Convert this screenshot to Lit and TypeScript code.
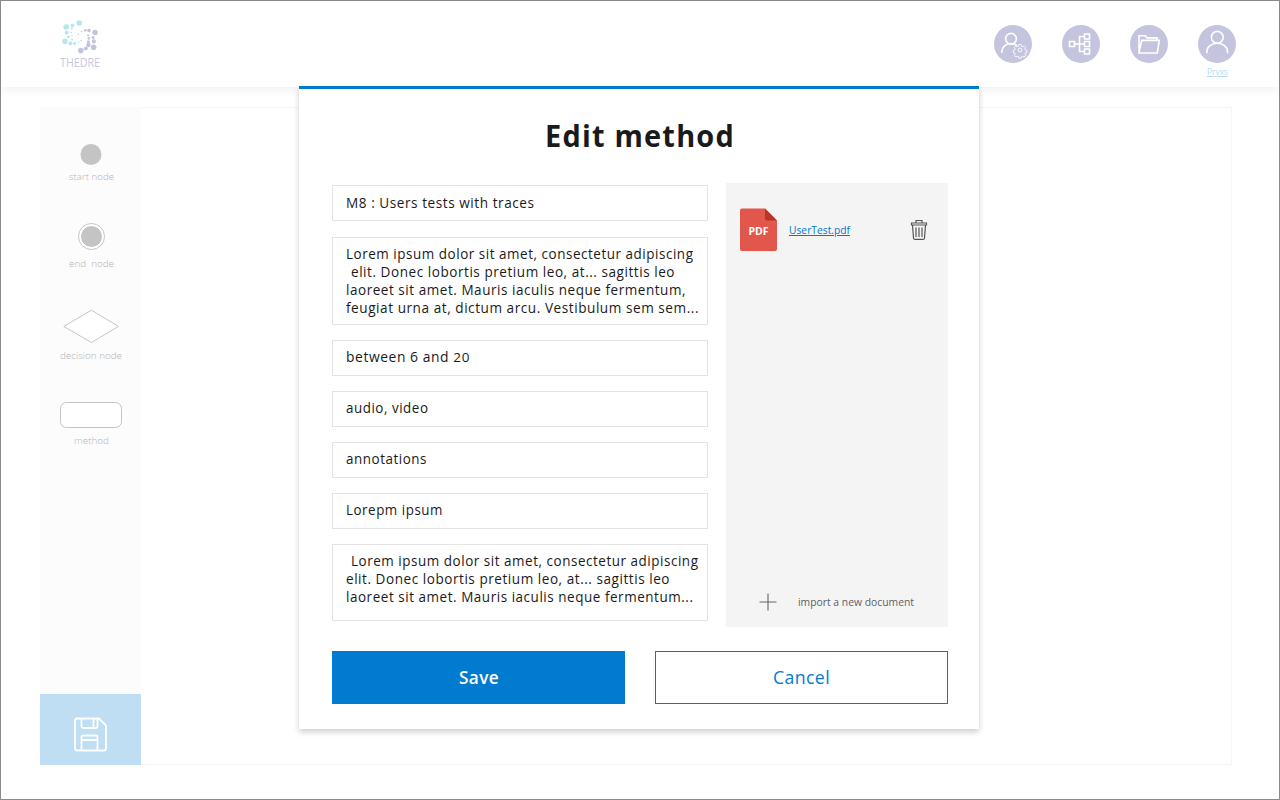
import { LitElement, html, css, svg } from "lit";
import { customElement, property } from "lit/decorators.js";

/** One line of text drawn exactly `span` pixels wide; `tail` is set in low figures. */
@customElement("fit-text")
export class FitText extends LitElement {
  @property({ type: Number }) span = 0;
  @property() text = "";
  @property() tail = "";
  @property({ type: Boolean, reflect: true }) underlined = false;

  static styles = css`
    :host {
      display: inline-block;
      white-space: pre;
      text-align: left;
    }
    .line {
      display: inline-block;
      transform-origin: 0 50%;
    }
    :host([underlined]) .line { text-decoration: underline; }
    .low {
      display: inline-block;
      font-size: 0.78em;
      line-height: 1;
      transform: scaleX(1.25);
      transform-origin: 0 50%;
      margin-right: 0.3em;
    }
  `;

  firstUpdated() {
    const line = this.renderRoot.querySelector(".line") as HTMLElement;
    const natural = line.getBoundingClientRect().width;
    if (this.span && natural) {
      this.style.width = `${this.span}px`;
      line.style.transform = `scaleX(${this.span / natural})`;
    }
  }

  render() {
    return html`<span class="line">${this.text}${this.tail ? html`<span class="low">${this.tail}</span>` : ""}</span>`;
  }
}

type Line = { text: string; w: number; indent?: boolean; tail?: string };
type Field = { size: string; lines: Line[] };

const FIELDS: Field[] = [
  { size: "first", lines: [{ text: "M8 : Users tests with traces", w: 188.5 }] },
  {
    size: "tall",
    lines: [
      { text: "Lorem ipsum dolor sit amet, consectetur adipiscing", w: 347.5 },
      { text: "elit. Donec lobortis pretium leo, at... sagittis leo", w: 324, indent: true },
      { text: "laoreet sit amet. Mauris iaculis neque fermentum,", w: 340 },
      { text: "feugiat urna at, dictum arcu. Vestibulum sem sem...", w: 353 },
    ],
  },
  { size: "", lines: [{ text: "between 6 and ", tail: "20", w: 124 }] },
  { size: "", lines: [{ text: "audio, video", w: 82.5 }] },
  { size: "", lines: [{ text: "annotations", w: 81 }] },
  { size: "", lines: [{ text: "Lorepm ipsum", w: 97 }] },
  {
    size: "medium",
    lines: [
      { text: "Lorem ipsum dolor sit amet, consectetur adipiscing", w: 347.5, indent: true },
      { text: "elit. Donec lobortis pretium leo, at... sagittis leo", w: 324 },
      { text: "laoreet sit amet. Mauris iaculis neque fermentum...", w: 347.5 },
    ],
  },
];

const LOGO_CYAN: [number, number, number][] = [
  [19.2, 3, 2.8], [12.4, 5.3, 1.9], [6.2, 7, 2.8], [6.7, 12.5, 2], [11.8, 8.4, 1.1],
  [11.2, 12.6, 0.8], [8.3, 17, 1.4], [5, 21.3, 2.8], [12, 19.4, 1], [10.4, 23.3, 2],
  [14.6, 23.4, 1.5], [18.4, 22.3, 0.8], [12, 16, 0.8],
];
const LOGO_VIOLET: [number, number, number][] = [
  [21.5, 11.6, 0.8], [25.3, 10.3, 1.4], [29, 10.6, 1.8], [35, 12.4, 2.7], [18.4, 14.2, 0.7],
  [28.2, 15.3, 1], [28.8, 18.4, 1.3], [33.2, 17.6, 1.5], [33.8, 21.4, 2.1], [28.4, 21.8, 1.6],
  [28.4, 25, 2.2], [33.6, 27.2, 2.8], [25.8, 28.6, 2], [20.8, 30.6, 2.8], [21.3, 20.4, 0.7],
];

const dots = (list: [number, number, number][], cls: string) =>
  list.map(([x, y, r]) => svg`<circle class=${cls} cx=${x} cy=${y} r=${r}></circle>`);

const ICONS = [
  svg`<circle cx="17" cy="13.8" r="5.4"/><path d="M7.800 28v-1c0-5 4.200-8.500 9-8.500 2.400 0 4.600.8 6.200 2.200"/>
    <g class="thin"><circle cx="26" cy="25" r="1.9"/><path d="M24.900 19.600h2.200l.4 1.600 1.300.5 1.400-.8 1.500 1.500-.8 1.400.5 1.200 1.500.4v2.100l-1.500.4-.5 1.200.8 1.400-1.500 1.500-1.400-.8-1.300.5-.4 1.500h-2.200l-.4-1.500-1.300-.5-1.400.8-1.400-1.500.8-1.400-.5-1.200-1.500-.4v-2.100l1.500-.4.5-1.200-.8-1.400 1.400-1.500 1.400.8 1.300-.5z"/></g>`,
  svg`<path d="M7.500 16.500h5v5h-5zM22.500 9h5v5h-5zM22.500 16.500h5v5h-5zM22.500 24h5v5h-5zM12.500 19h10M22.500 11.500h-5v15h5"/>`,
  svg`<path d="M9 28V10.800h6.300l1.700 2.100h10v2.500M9 28h18.300l2-12.600h-17.600z"/>`,
  svg`<circle cx="19.3" cy="12.3" r="5.9"/><path d="M8.900 28.300v-1.500c0-5 4.600-8.600 10.300-8.600s10.300 3.600 10.300 8.600v1.500"/>`,
];

@customElement("app-root")
export class AppRoot extends LitElement {
  static styles = css`
    * { box-sizing: border-box; }
    :host {
      display: block;
      width: 1280px;
      height: 800px;
      overflow: hidden;
      font-family: "Open Sans", "Noto Sans", sans-serif;
      color: #1a1a1a;
    }
    .page {
      position: relative;
      display: flex;
      flex-direction: column;
      height: 800px;
      border: 1px solid #8c8c8c;
      background: #fff;
    }
    svg { display: block; fill: none; }
    .header {
      display: flex;
      justify-content: space-between;
      height: 86px;
      flex: none;
      padding: 19px 43px 0 59px;
      box-shadow: 0 3px 10px rgba(0, 0, 0, 0.06);
    }
    .logo { width: 42px; }
    .cyan { fill: #b9e6ee; }
    .violet { fill: #c3c4db; }
    .brand {
      font: 400 12px/14px "Open Sans", sans-serif;
      color: #c6c8e0;
      height: 14px;
    }
    .nav { display: flex; gap: 30px; padding-top: 5px; }
    .navitem { width: 38px; text-align: center; }
    .disc { width: 38px; height: 38px; border-radius: 50%; background: #c4c4de; }
    .disc svg { stroke: #fff; stroke-width: 1.6; }
    .disc .thin { stroke-width: 0.9; }
    .user {
      color: #b5daf2;
      font-size: 9.5px;
      line-height: 12px;
      margin-top: 3px;
    }
    .board {
      display: flex;
      width: 1192px;
      height: 658px;
      margin: 20px 0 0 39px;
      border: 1px solid #f6f6f6;
      border-left: 0;
    }
    .palette {
      display: flex;
      flex-direction: column;
      align-items: center;
      width: 101px;
      margin: -1px 0;
      padding: 36px 0 0 1px;
      background: #fcfcfc;
      font-size: 9.5px;
      line-height: 12px;
      font-weight: 300;
      color: #b4b4b4;
    }
    .palette svg { stroke: #c4c4c4; flex: none; }
    .solid { fill: #c4c4c4; stroke: none; }
    .white { fill: #fff; }
    .l1 { margin: 5px 0 39px; }
    .l2 { margin: 8px 0 39px; }
    .l3 { margin: 7px 0 40px; }
    .l4 { margin: 7px 0 0; }
    .savebox {
      display: flex;
      align-items: flex-end;
      justify-content: center;
      width: 101px;
      height: 71px;
      margin: auto 0 0 -1px;
      padding-bottom: 13px;
      background: #bfddf3;
    }
    .palette .savebox svg { stroke: #fff; stroke-width: 1.8; }
    .modal {
      position: absolute;
      left: 298px;
      top: 85px;
      width: 680px;
      height: 643px;
      padding: 0 31px 25px 33px;
      display: flex;
      flex-direction: column;
      border-top: 3px solid #007bd0;
      background: #fff;
      box-shadow: 0 3px 6px rgba(0, 0, 0, 0.2);
    }
    .title {
      margin: 0 0 25px;
      height: 69px;
      padding: 25px 1px 0 0;
      text-align: center;
      font-size: 31px;
      line-height: 42px;
      font-weight: 700;
      letter-spacing: 1.3px;
    }
    .body { display: flex; justify-content: space-between; height: 444px; }
    .fields { display: flex; flex-direction: column; width: 376px; gap: 15px; padding-top: 2px; }
    .field {
      height: 36px;
      border: 1px solid #e3e3e3;
      padding: 6px 0 0 13px;
      font-size: 15px;
      line-height: 18px;
      letter-spacing: 0.6px;
    }
    .field.first { padding-top: 7px; margin-bottom: 1px; }
    .tall { height: 88px; }
    .medium { height: 77px; }
    .row { height: 18px; }
    .indent { padding-left: 4.5px; }
    .docs {
      display: flex;
      flex-direction: column;
      justify-content: space-between;
      width: 222px;
      padding: 25px 20px 14px 14px;
      background: #f4f4f4;
    }
    .doc { display: flex; align-items: center; height: 44px; }
    .link { flex: 1; margin: -1px 0 0 12px; font-size: 11.5px; color: #007bd0; }
    .trash { stroke: #555; stroke-width: 1.2; margin-top: -1px; }
    .pdf { font: 700 10.5px "Open Sans", sans-serif; fill: #fff; }
    .import { display: flex; align-items: center; gap: 21px; height: 22px; padding-left: 19px; font-size: 11px; color: #606060; }
    .caption { margin-top: -2px; }
    .plus { stroke: #666; stroke-width: 1.1; }
    .actions { display: flex; justify-content: space-between; margin-top: 24px; }
    .btn {
      width: 293px;
      height: 53px;
      padding: 0 0 2px;
      border: 1px solid #007bd0;
      background: #fff;
      color: #007bd0;
      font: 400 18.5px/49px "Open Sans", sans-serif;
      letter-spacing: 0.4px;
      text-align: center;
    }
    .primary { background: #007bd0; color: #fff; font-weight: 600; }
  `;

  render() {
    return html`
      <div class="page">
        <header class="header">
          <div class="logo">
            <svg width="42" height="36" viewBox="0 0 42 36">
              ${dots(LOGO_CYAN, "cyan")}${dots(LOGO_VIOLET, "violet")}
            </svg>
            <div class="brand"><fit-text text="THEDRE" span="40"></fit-text></div>
          </div>
          <nav class="nav">
            ${ICONS.map(
              (icon, i) => html`<div class="navitem">
                <div class="disc"><svg width="38" height="38" viewBox="0 0 38 38">${icon}</svg></div>
                ${i === 3 ? html`<div class="user"><fit-text underlined text="Pryxs" span="21"></fit-text></div>` : ""}
              </div>`
            )}
          </nav>
        </header>
        <main class="board">
          <aside class="palette">
            <svg width="22" height="23"><circle class="solid" cx="11" cy="11.5" r="10.5"/></svg>
            <div class="l1"><fit-text text="start node" span="45"></fit-text></div>
            <svg width="28" height="28"><circle class="white" cx="14.5" cy="14.5" r="13"/><circle class="solid" cx="14.5" cy="14.5" r="10.5"/></svg>
            <div class="l2"><fit-text text="end  node" span="45"></fit-text></div>
            <svg width="56" height="34"><path class="white" d="M.8 17.400 28.400 1.200 55.500 17.400 28.400 33.500z"/></svg>
            <div class="l3"><fit-text text="decision node" span="62"></fit-text></div>
            <svg width="62" height="26"><rect class="white" x=".5" y=".5" width="61" height="25" rx="6"/></svg>
            <div class="l4"><fit-text text="method" span="35"></fit-text></div>
            <div class="savebox">
              <svg width="34" height="35" viewBox="0 0 34 35">
                <path d="M3 1.500h22l7 7V31.500a2 2 0 0 1-2 2H3a2 2 0 0 1-2-2v-28a2 2 0 0 1 2-2zM7.500 2v7.500a1.500 1.500 0 0 0 1.500 1.500h13a1.500 1.500 0 0 0 1.500-1.500V2M19.500 2v9M7.500 33V20a1.500 1.500 0 0 1 1.500-1.500h13a1.500 1.500 0 0 1 1.500 1.500V33M7.500 23h16"/>
              </svg>
            </div>
          </aside>
        </main>
        <section class="modal">
          <h1 class="title"><fit-text text="Edit method" span="190"></fit-text></h1>
          <div class="body">
            <div class="fields">
              ${FIELDS.map(
                (f) => html`<div class="field ${f.size}">
                  ${f.lines.map(
                    (l) => html`<div class="row ${l.indent ? "indent" : ""}"><fit-text .text=${l.text} .tail=${l.tail ?? ""} .span=${l.w}></fit-text></div>`
                  )}
                </div>`
              )}
            </div>
            <aside class="docs">
              <div class="doc">
                <svg width="37" height="44" viewBox="0 0 37 44">
                  <path fill="#e2574c" d="M2 .5h23l12 12V41a2 2 0 0 1-2 2H2a2 2 0 0 1-2-2v-38.500a2 2 0 0 1 2-2z"/>
                  <path fill="#b53629" d="M25 .5l12 12H27a2 2 0 0 1-2-2z"/>
                  <text class="pdf" x="8.5" y="27" textLength="20">PDF</text>
                </svg>
                <div class="link"><fit-text underlined text="UserTest.pdf" span="61"></fit-text></div>
                <svg class="trash" width="18" height="22" viewBox="0 0 18 22">
                  <path d="M1.500 4h15v2h-15zM6 3.700V1.500h6v2.200M2.500 6l1 13a1.500 1.500 0 0 0 1.500 1.400h8a1.500 1.500 0 0 0 1.500-1.400l1-13M6 8.500v9.500M9 8.500v9.500M12 8.500v9.500"/>
                </svg>
              </div>
              <div class="import">
                <svg class="plus" width="18" height="18"><path d="M9 .5v17M.5 9h17"/></svg>
                <fit-text class="caption" text="import a new document" span="116"></fit-text>
              </div>
            </aside>
          </div>
          <div class="actions">
            <button class="btn primary"><fit-text text="Save" span="40"></fit-text></button>
            <button class="btn"><fit-text text="Cancel" span="57"></fit-text></button>
          </div>
        </section>
      </div>
    `;
  }
}
